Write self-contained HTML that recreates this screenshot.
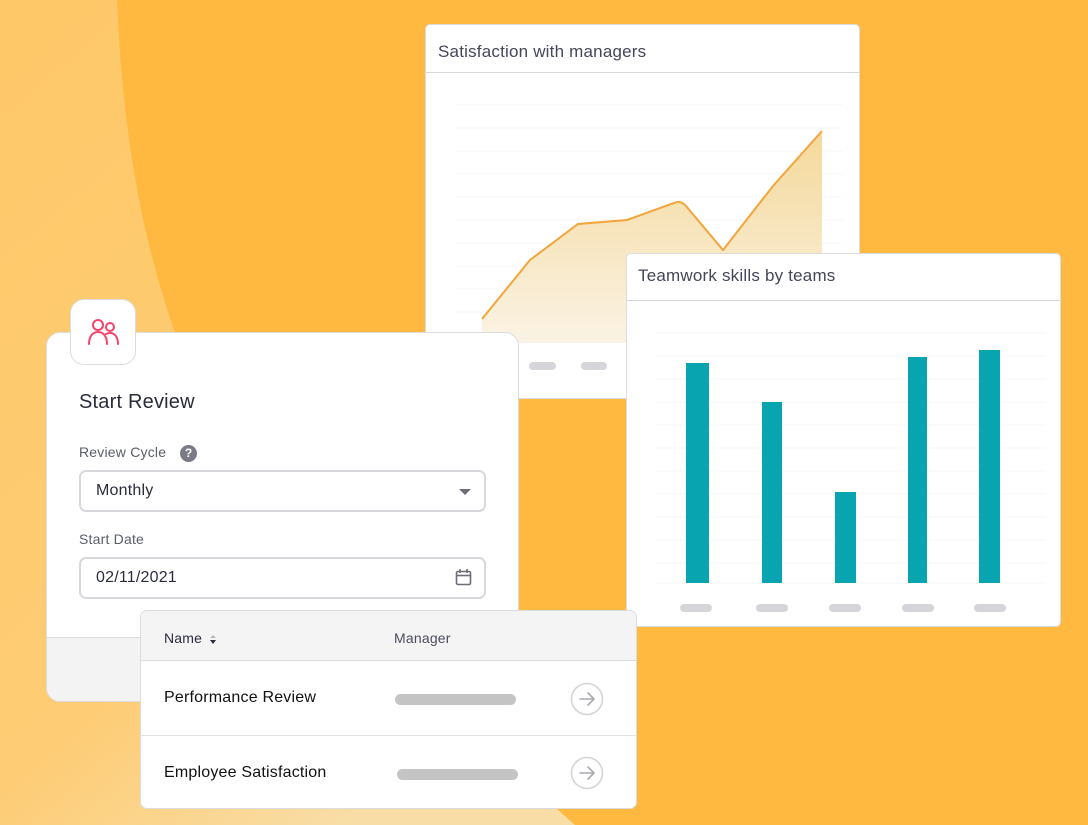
<!DOCTYPE html>
<html><head><meta charset="utf-8"><style>
*{margin:0;padding:0;box-sizing:border-box}
body{width:1088px;height:825px;overflow:hidden;background:#FFB941;font-family:"Liberation Sans",sans-serif;position:relative}
.abs{position:absolute}
.card{position:absolute;background:#fff;border:1px solid #dcdce0}
.t{position:absolute;white-space:nowrap;letter-spacing:0.2px}
</style></head><body>
<svg class="abs" style="left:0;top:0" width="1088" height="825">
<defs><linearGradient id="lg" x1="0" y1="0" x2="0.6" y2="1"><stop offset="0" stop-color="#FEC868"/><stop offset="0.7" stop-color="#FECC74"/><stop offset="1" stop-color="#F8DDA6"/></linearGradient></defs>
<path d="M0,0 L117,0 C123,140 143,250 185,360 C265,520 420,690 575,825 L0,825 Z" fill="url(#lg)"/>
</svg>

<!-- Chart 1 -->
<div class="card" style="left:425px;top:24px;width:435px;height:375px;border-radius:5px;">
<div class="t" style="left:12px;top:17px;font-size:17px;color:#44465a">Satisfaction with managers</div>
<div class="abs" style="left:0;top:47px;width:433px;height:1px;background:#d8d8dc"></div>
</div>
<svg class="abs" style="left:425px;top:24px" width="435" height="375">
<defs><linearGradient id="fa" x1="0" y1="0" x2="0" y2="1"><stop offset="0" stop-color="#F5D89A"/><stop offset="1" stop-color="#FAF3E4"/></linearGradient></defs>
<g stroke="#f7f7f7" stroke-width="1">
<line x1="30" x2="418" y1="81" y2="81"/><line x1="30" x2="418" y1="104" y2="104"/><line x1="30" x2="418" y1="127" y2="127"/><line x1="30" x2="418" y1="150" y2="150"/><line x1="30" x2="418" y1="173" y2="173"/><line x1="30" x2="418" y1="196" y2="196"/><line x1="30" x2="418" y1="219" y2="219"/><line x1="30" x2="418" y1="242" y2="242"/><line x1="30" x2="418" y1="265" y2="265"/><line x1="30" x2="418" y1="288" y2="288"/><line x1="30" x2="418" y1="311" y2="311"/></g>
<path d="M57,295 L105,236 L153,200 L202,196 L249,179 Q256,176 261,182 L298,226 L348,162 L397,107 L397,319 L57,319 Z" fill="url(#fa)"/>
<path d="M57,295 L105,236 L153,200 L202,196 L249,179 Q256,176 261,182 L298,226 L348,162 L397,107" fill="none" stroke="#F3A43A" stroke-width="2"/>
<g fill="#d5d5da"><rect x="53" y="338" width="27" height="8" rx="4"/><rect x="104" y="338" width="27" height="8" rx="4"/><rect x="156" y="338" width="26" height="8" rx="4"/></g>
</svg>

<!-- Chart 2 -->
<div class="card" style="left:626px;top:253px;width:435px;height:374px;border-radius:5px;">
<div class="t" style="left:11px;top:12px;font-size:17px;color:#44465a">Teamwork skills by teams</div>
<div class="abs" style="left:0;top:46px;width:433px;height:1px;background:#d8d8dc"></div>
</div>
<svg class="abs" style="left:626px;top:253px" width="435" height="374">
<g stroke="#f7f7f7" stroke-width="1">
<line x1="29" x2="420" y1="80" y2="80"/><line x1="29" x2="420" y1="103" y2="103"/><line x1="29" x2="420" y1="126" y2="126"/><line x1="29" x2="420" y1="149" y2="149"/><line x1="29" x2="420" y1="172" y2="172"/><line x1="29" x2="420" y1="195" y2="195"/><line x1="29" x2="420" y1="218" y2="218"/><line x1="29" x2="420" y1="241" y2="241"/><line x1="29" x2="420" y1="264" y2="264"/><line x1="29" x2="420" y1="287" y2="287"/><line x1="29" x2="420" y1="310" y2="310"/><line x1="29" x2="420" y1="330" y2="330"/></g>
<g fill="#08A4B0"><rect x="60" y="110" width="23" height="220"/><rect x="136" y="149" width="20" height="181"/><rect x="209" y="239" width="21" height="91"/><rect x="282" y="104" width="19" height="226"/><rect x="353" y="97" width="21" height="233"/></g>
<g fill="#d5d5da"><rect x="54" y="351" width="32" height="8" rx="4"/><rect x="130" y="351" width="32" height="8" rx="4"/><rect x="203" y="351" width="32" height="8" rx="4"/><rect x="276" y="351" width="32" height="8" rx="4"/><rect x="348" y="351" width="32" height="8" rx="4"/></g>
</svg>

<!-- Start Review card -->
<div class="card" style="left:46px;top:332px;width:473px;height:370px;border-radius:14px;overflow:hidden">
<div class="abs" style="left:0;top:304px;width:473px;height:66px;background:#F3F3F4;border-top:1px solid #dcdce0"></div>
<div class="t" style="left:32px;top:58px;font-size:20px;color:#2a2c3c">Start Review</div>
<div class="t" style="left:32px;top:111px;font-size:14px;color:#5a5c6a">Review Cycle</div>
<div class="abs" style="left:133px;top:112px;width:17px;height:17px;border-radius:50%;background:#7a7b86;color:#fff;font-size:12px;font-weight:bold;text-align:center;line-height:17px">?</div>
<div class="abs" style="left:32px;top:137px;width:407px;height:42px;border:2px solid #d8d8dc;border-radius:7px">
<div class="t" style="left:15px;top:10px;font-size:16px;color:#2a2c3c">Monthly</div>
<div class="abs" style="left:378px;top:17px;width:0;height:0;border-left:6px solid transparent;border-right:6px solid transparent;border-top:6px solid #6c6d78"></div>
</div>
<div class="t" style="left:32px;top:198px;font-size:14px;color:#5a5c6a">Start Date</div>
<div class="abs" style="left:32px;top:224px;width:407px;height:42px;border:2px solid #d8d8dc;border-radius:7px">
<div class="t" style="left:15px;top:10px;font-size:16px;color:#2a2c3c">02/11/2021</div>
<svg class="abs" style="left:374px;top:9px" width="18" height="20"><rect x="1.5" y="3.5" width="14" height="13" rx="1.5" fill="none" stroke="#6c6d78" stroke-width="1.6"/><line x1="1.5" y1="7.5" x2="15.5" y2="7.5" stroke="#6c6d78" stroke-width="1.6"/><line x1="5" y1="1" x2="5" y2="5" stroke="#6c6d78" stroke-width="1.6"/><line x1="12" y1="1" x2="12" y2="5" stroke="#6c6d78" stroke-width="1.6"/></svg>
</div>
</div>
<div class="abs" style="left:70px;top:299px;width:66px;height:66px;background:#fff;border:1px solid #dcdce0;border-radius:14px">
<svg class="abs" style="left:16px;top:18px" width="34" height="28"><g fill="none" stroke="#F2456A" stroke-width="2" stroke-linecap="round"><circle cx="11" cy="7" r="5"/><path d="M2,26 C2,18 6,14 11,14 C16,14 20,18 20,26"/><circle cx="23" cy="9" r="4"/><path d="M19,16 C21,15 22,15 23,15 C27,15 31,18 31,26"/></g></svg>
</div>

<!-- Table -->
<div class="card" style="left:140px;top:610px;width:497px;height:199px;border-radius:7px;overflow:hidden">
<div class="abs" style="left:0;top:0;width:497px;height:50px;background:#F4F4F5;border-bottom:1px solid #dcdce0"></div>
<div class="t" style="left:23px;top:19px;font-size:14px;color:#2a2c3c">Name</div>
<div class="abs" style="left:69px;top:24px;width:0;height:0;border-left:3px solid transparent;border-right:3px solid transparent;border-bottom:3px solid #b8b8c0"></div>
<div class="abs" style="left:69px;top:29px;width:0;height:0;border-left:3px solid transparent;border-right:3px solid transparent;border-top:4px solid #2a2c3c"></div>
<div class="t" style="left:253px;top:19px;font-size:14px;color:#4a4c5c">Manager</div>
<div class="t" style="left:23px;top:78px;font-size:16px;color:#111">Performance Review</div>
<div class="abs" style="left:254px;top:83px;width:121px;height:11px;border-radius:6px;background:#c4c4c4"></div>
<div class="abs" style="left:0;top:124px;width:497px;height:1px;background:#e2e2e6"></div>
<div class="t" style="left:23px;top:153px;font-size:16px;color:#111">Employee Satisfaction</div>
<div class="abs" style="left:256px;top:158px;width:121px;height:11px;border-radius:6px;background:#c4c4c4"></div>
<svg class="abs" style="left:429px;top:71px" width="36" height="36"><circle cx="17" cy="17" r="15.5" fill="none" stroke="#d4d4d8" stroke-width="1.6"/><path d="M10,17 H24 M18,11 L24,17 L18,23" fill="none" stroke="#a8a8b0" stroke-width="1.6" stroke-linecap="round" stroke-linejoin="round"/></svg>
<svg class="abs" style="left:429px;top:145px" width="36" height="36"><circle cx="17" cy="17" r="15.5" fill="none" stroke="#d4d4d8" stroke-width="1.6"/><path d="M10,17 H24 M18,11 L24,17 L18,23" fill="none" stroke="#a8a8b0" stroke-width="1.6" stroke-linecap="round" stroke-linejoin="round"/></svg>
</div>
</body></html>
